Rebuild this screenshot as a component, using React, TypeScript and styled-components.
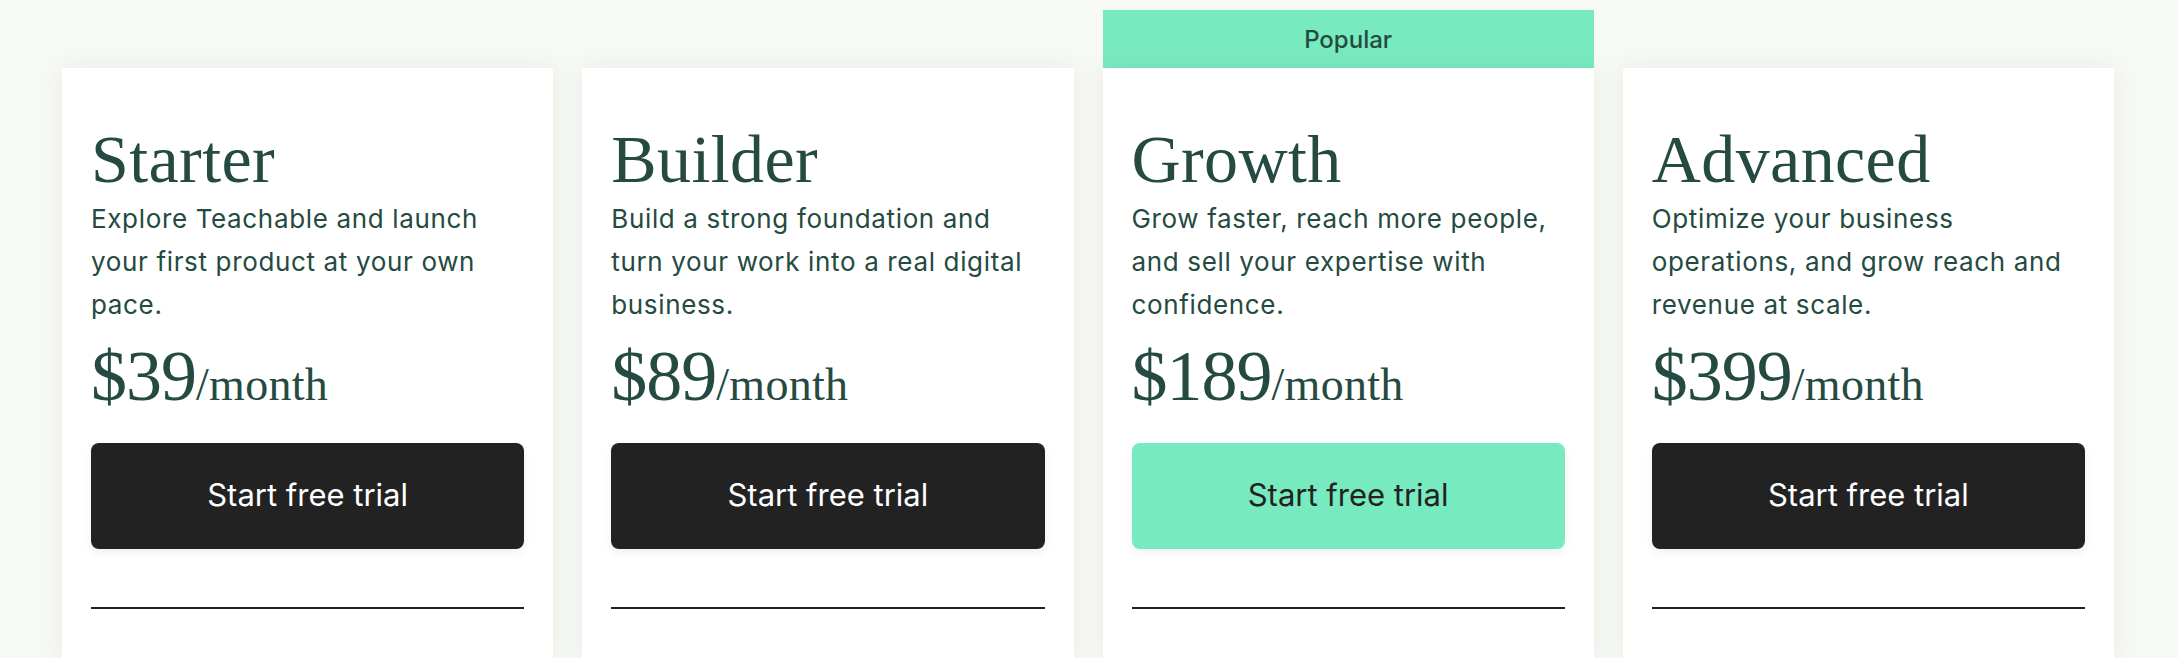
import React from 'react';
import styled, { createGlobalStyle } from 'styled-components';

const INK = '#244a41';
const MINT = '#78eabf';

const GlobalStyle = createGlobalStyle`
  html, body {
    margin: 0;
    padding: 0;
    background: #f7f9f4;
  }

  body {
    font-family: Inter, "Noto Sans", sans-serif;
    color: ${INK};
    overflow: hidden;
  }
`;

interface Plan {
  name: string;
  blurb: string;
  price: string;
  popular?: boolean;
}

const plans: Plan[] = [
  { name: 'Starter', blurb: 'Explore Teachable and launch your first product at your own pace.', price: '$39' },
  { name: 'Builder', blurb: 'Build a strong foundation and turn your work into a real digital business.', price: '$89' },
  { name: 'Growth', blurb: 'Grow faster, reach more people, and sell your expertise with confidence.', price: '$189', popular: true },
  { name: 'Advanced', blurb: 'Optimize your business operations, and grow reach and revenue at scale.', price: '$399' }
];

const Grid = styled.div`
  display: grid;
  grid-template-columns: repeat(4, 1fr);
  column-gap: 29px;
  padding: 10px 64px 0 62px;
  height: 658px;
  box-sizing: border-box;
`;

const Column = styled.div`
  display: flex;
  flex-direction: column;
`;

const Badge = styled.div<{ $show: boolean }>`
  height: 58px;
  display: flex;
  align-items: center;
  justify-content: center;
  background: ${({ $show }) => ($show ? MINT : 'transparent')};
  font-size: 24px;
  font-weight: 500;
  color: ${INK};
  padding-top: 1px;
  box-sizing: border-box;
`;

const Card = styled.div`
  flex: 1;
  background: #fff;
  box-shadow: 0 0 22px rgba(60, 70, 50, 0.08);
  padding: 54px 29px 0;
  display: flex;
  flex-direction: column;
`;

const Title = styled.h2`
  margin: 0;
  font-family: "Liberation Serif", "DejaVu Serif", serif;
  font-weight: 400;
  font-size: 68px;
  line-height: 1.1;
  letter-spacing: 0.4px;
`;

const Blurb = styled.p`
  margin: 0;
  font-size: 26px;
  line-height: 43px;
  letter-spacing: 0.65px;
`;

const Price = styled.div`
  margin-top: 11px;
  font-family: "Liberation Serif", "DejaVu Serif", serif;
  font-size: 72px;
  line-height: 1.1;
  letter-spacing: -1px;

  span {
    font-size: 46px;
    letter-spacing: 0.3px;
  }
`;

const TrialButton = styled.button<{ $accent: boolean }>`
  margin-top: 27px;
  height: 106px;
  width: 100%;
  border: 0;
  border-radius: 8px;
  background: ${({ $accent }) => ($accent ? MINT : '#222222')};
  color: ${({ $accent }) => ($accent ? '#222222' : '#ffffff')};
  box-shadow: 0 4px 10px rgba(0, 0, 0, 0.06);
  font-family: Inter, "Noto Sans", sans-serif;
  font-size: 31px;
  font-weight: 400;
  padding: 0 0 2px;
  cursor: pointer;
`;

const Rule = styled.hr`
  margin: 58px 0 0;
  border: 0;
  border-top: 2px solid #222;
`;

function PlanCard({ plan }: { plan: Plan }): React.ReactElement {
  return (
    <Column>
      <Badge $show={!!plan.popular}>{plan.popular ? 'Popular' : null}</Badge>
      <Card>
        <Title>{plan.name}</Title>
        <Blurb>{plan.blurb}</Blurb>
        <Price>
          {plan.price}
          <span>/month</span>
        </Price>
        <TrialButton $accent={!!plan.popular}>Start free trial</TrialButton>
        <Rule />
      </Card>
    </Column>
  );
}

export default function App(): React.ReactElement {
  return (
    <>
      <GlobalStyle />
      <Grid>
        {plans.map((plan) => (
          <PlanCard key={plan.name} plan={plan} />
        ))}
      </Grid>
    </>
  );
}
